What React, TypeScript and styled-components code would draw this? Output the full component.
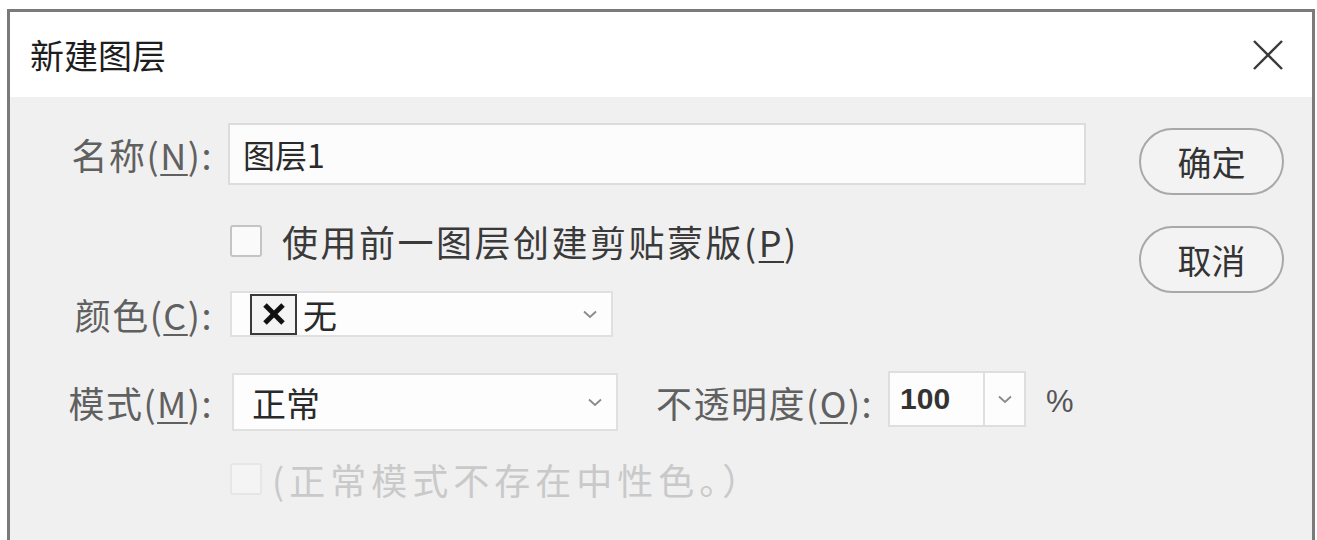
import React from 'react'
import styled, { createGlobalStyle } from 'styled-components'

const Global = createGlobalStyle`
  html, body { margin: 0; padding: 0; background: #ffffff; }
  body { font-family: "Noto Sans CJK SC", "Noto Sans", sans-serif; }
`

const Page = styled.div`
  width: 1317px;
  height: 540px;
  padding: 9px 2px 0 7px;
  box-sizing: border-box;
  overflow: hidden;
`

const Dialog = styled.div`
  height: 530px;
  border: 3px solid #7a7a7a;
  border-bottom-width: 6px;
  display: flex;
  flex-direction: column;
  background: #f0f0f0;
`

const TitleBar = styled.div`
  height: 85px;
  background: #ffffff;
  display: flex;
  align-items: center;
  justify-content: space-between;
  padding: 0 28px 0 20px;
  flex-shrink: 0;
`

const Title = styled.div`
  font-size: 34px;
  color: #1e1e1e;
`

const Body = styled.div`
  flex: 1;
  display: flex;
  padding: 26px 28px 0 0;
`

const Form = styled.div`
  flex: 1;
  display: flex;
  flex-direction: column;
`

const Row = styled.div<{ $h: number; $mt: number }>`
  display: flex;
  align-items: center;
  height: ${p => p.$h}px;
  margin-top: ${p => p.$mt}px;
`

const Label = styled.div`
  width: 203px;
  text-align: right;
  padding-right: 15px;
  font-size: 36px;
  letter-spacing: 1.5px;
  color: #606060;
  white-space: nowrap;
  flex-shrink: 0;
`

const U = styled.span`
  text-decoration: underline;
  text-underline-offset: 4px;
  text-decoration-thickness: 2px;
`

const TextInput = styled.div`
  width: 858px;
  height: 62px;
  box-sizing: border-box;
  background: #fcfcfc;
  border: 2px solid #dcdcdc;
  display: flex;
  align-items: center;
  padding-left: 13px;
  font-size: 32px;
  color: #2a2a2a;
`

const Select = styled.div<{ $w: number; $h: number; $ml: number }>`
  width: ${p => p.$w}px;
  height: ${p => p.$h}px;
  margin-left: ${p => p.$ml}px;
  box-sizing: border-box;
  background: #fdfdfd;
  border: 2px solid #e0e0e0;
  display: flex;
  align-items: center;
  padding: 0 14px 0 18px;
  font-size: 34px;
  color: #2a2a2a;
`

const SelectText = styled.div`
  flex: 1;
  display: flex;
  align-items: center;
  gap: 6px;
`

const Swatch = styled.div`
  width: 47px;
  height: 41px;
  box-sizing: border-box;
  border: 2px solid #3a3a3a;
  display: flex;
  align-items: center;
  justify-content: center;
  background: #f4f4f4;
`

const Check = styled.div<{ $disabled?: boolean }>`
  width: 32px;
  height: 32px;
  box-sizing: border-box;
  border: 2px solid ${p => (p.$disabled ? '#e6e6e6' : '#c4c4c4')};
  border-radius: 3px;
  background: ${p => (p.$disabled ? '#f4f4f4' : '#fafafa')};
  flex-shrink: 0;
`

const CheckText = styled.div<{ $disabled?: boolean }>`
  font-size: 36px;
  letter-spacing: ${p => (p.$disabled ? 5 : 2.5)}px;
  color: ${p => (p.$disabled ? '#c9c9c9' : '#3a3a3a')};
  margin-left: ${p => (p.$disabled ? 10 : 20)}px;
  white-space: nowrap;
`

const Spacer = styled.div`
  width: 220px;
  flex-shrink: 0;
`

const OpacityLabel = styled(Label)`
  width: auto;
  margin-left: 38px;
`

const Spin = styled.div`
  width: 138px;
  height: 56px;
  box-sizing: border-box;
  background: #fdfdfd;
  border: 2px solid #dedede;
  display: flex;
  align-items: stretch;
  margin-top: -6px;
`

const SpinValue = styled.div`
  flex: 1;
  display: flex;
  align-items: center;
  padding-left: 10px;
  font-family: "Liberation Sans", Arial, sans-serif;
  font-weight: bold;
  font-size: 30px;
  color: #333;
  border-right: 2px solid #e0e0e0;
`

const SpinArrow = styled.div`
  width: 39px;
  display: flex;
  align-items: center;
  justify-content: center;
`

const Percent = styled.div`
  margin-left: 20px;
  font-family: "Liberation Sans", Arial, sans-serif;
  font-size: 31px;
  color: #555;
`

const Buttons = styled.div`
  width: 145px;
  display: flex;
  flex-direction: column;
  gap: 31px;
  padding-top: 5px;
  margin-left: 49px;
`

const Button = styled.div`
  height: 67px;
  box-sizing: border-box;
  border: 2px solid #a8a8a8;
  border-radius: 34px;
  background: #f3f3f3;
  display: flex;
  align-items: center;
  justify-content: center;
  font-size: 34px;
  color: #333;
`

const Chevron = () => (
  <svg width="14" height="9" viewBox="0 0 14 9">
    <polyline points="1,1.5 7,7 13,1.5" fill="none" stroke="#8a8a8a" strokeWidth="1.8" />
  </svg>
)

const CloseIcon = () => (
  <svg width="32" height="30" viewBox="0 0 32 30">
    <line x1="2" y1="1" x2="30" y2="29" stroke="#3a3a3a" strokeWidth="2.4" />
    <line x1="30" y1="1" x2="2" y2="29" stroke="#3a3a3a" strokeWidth="2.4" />
  </svg>
)

const XMark = () => (
  <svg width="24" height="24" viewBox="0 0 24 24">
    <line x1="3" y1="3" x2="21" y2="21" stroke="#111" strokeWidth="5" />
    <line x1="21" y1="3" x2="3" y2="21" stroke="#111" strokeWidth="5" />
  </svg>
)

export default function App() {
  return (
    <Page>
      <Global />
      <Dialog>
        <TitleBar>
          <Title>新建图层</Title>
          <CloseIcon />
        </TitleBar>
        <Body>
          <Form>
            <Row $h={62} $mt={0}>
              <Label>名称(<U>N</U>):</Label>
              <TextInput>图层1</TextInput>
            </Row>
            <Row $h={40} $mt={36}>
              <Spacer />
              <Check />
              <CheckText>使用前一图层创建剪贴蒙版(<U>P</U>)</CheckText>
            </Row>
            <Row $h={46} $mt={30}>
              <Label>颜色(<U>C</U>):</Label>
              <Select $w={383} $h={46} $ml={2}>
                <SelectText>
                  <Swatch><XMark /></Swatch>
                  无
                </SelectText>
                <Chevron />
              </Select>
            </Row>
            <Row $h={58} $mt={36}>
              <Label>模式(<U>M</U>):</Label>
              <Select $w={386} $h={58} $ml={4}>
                <SelectText>正常</SelectText>
                <Chevron />
              </Select>
              <OpacityLabel>不透明度(<U>O</U>):</OpacityLabel>
              <Spin>
                <SpinValue>100</SpinValue>
                <SpinArrow><Chevron /></SpinArrow>
              </Spin>
              <Percent>%</Percent>
            </Row>
            <Row $h={36} $mt={30}>
              <Spacer />
              <Check $disabled />
              <CheckText $disabled>(正常模式不存在中性色。）</CheckText>
            </Row>
          </Form>
          <Buttons>
            <Button>确定</Button>
            <Button>取消</Button>
          </Buttons>
        </Body>
      </Dialog>
    </Page>
  )
}
